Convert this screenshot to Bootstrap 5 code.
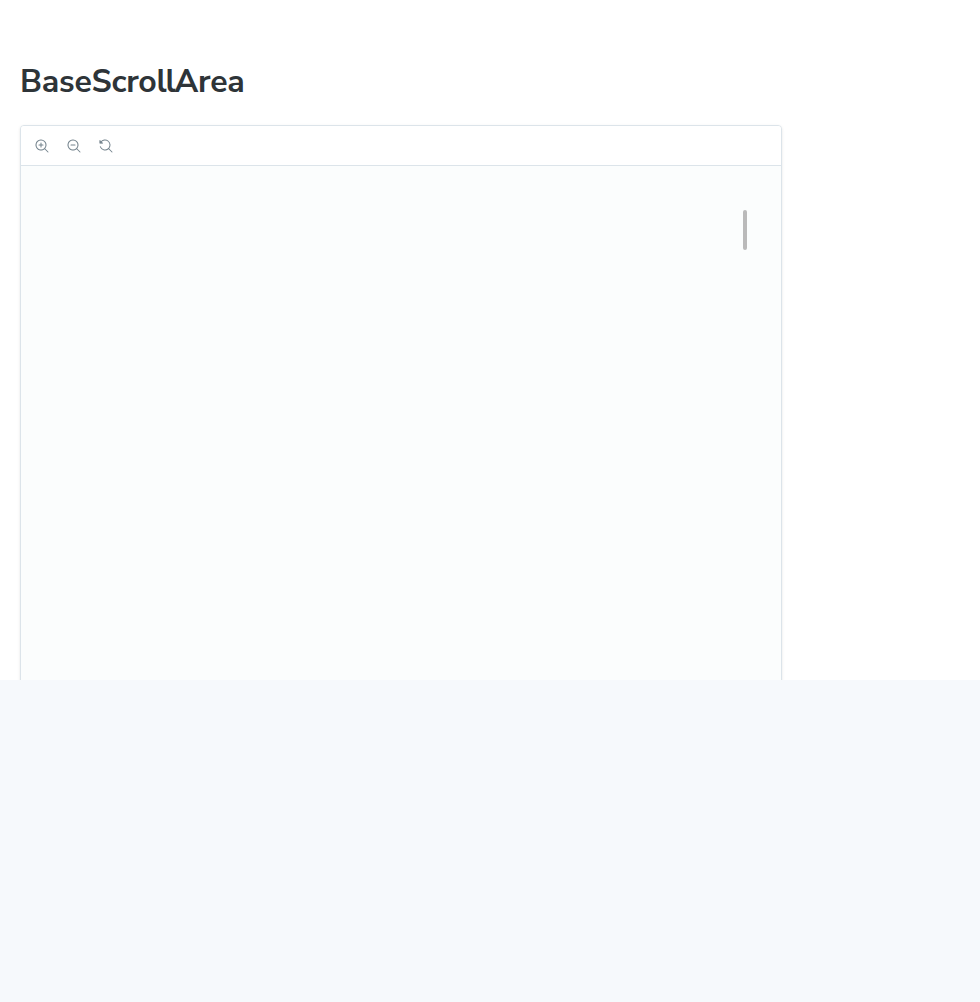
<!DOCTYPE html>
<html lang="en">
<head>
<meta charset="utf-8">
<meta name="viewport" content="width=device-width, initial-scale=1">
<title>BaseScrollArea</title>
<link rel="stylesheet" href="https://cdn.jsdelivr.net/npm/bootstrap@5.3.0/dist/css/bootstrap.min.css">
<style>
body { background: #f6f9fc; font-family: "Nunito Sans", Lato, "Open Sans", sans-serif; min-height: 100vh; }
.docs-page { height: 680px; padding: 64px 20px 0; }
.docs-title { color: #2e3438; font-size: 32px; line-height: 36px; font-weight: 700; letter-spacing: -0.25px; margin-bottom: 25px; }
.tight-pair { letter-spacing: -1.2px; }
.preview { width: 762px; height: 700px; border: 1px solid #dce4ea; border-radius: 4px; background: #fbfdfd; box-shadow: 0 1px 3px rgba(0,0,0,.1); }
.preview-bar { height: 40px; border-bottom: 1px solid #dce4ea; border-radius: 3px 3px 0 0; padding-left: 7px; gap: 4px; }
.tool { width: 28px; height: 28px; color: #73828c; }
.tool svg { width: 14px; height: 14px; }
.scroll-region { padding: 44px 34px 0 0; }
.scroll-thumb { width: 4px; height: 40px; border-radius: 2px; background: #bababa; }
</style>
</head>
<body>
<main class="docs-page bg-white overflow-hidden">
  <h1 class="docs-title">BaseScro<span class="tight-pair">ll</span>Area</h1>
  <section class="preview">
    <div class="preview-bar d-flex align-items-center bg-white">
      <button class="tool btn border-0 p-0 d-flex align-items-center justify-content-center" type="button" aria-label="Zoom in">
        <svg viewBox="0 0 14 14" fill="currentColor"><path d="M6 3.5a.5.5 0 01.5.5v1.5H8a.5.5 0 010 1H6.5V8a.5.5 0 01-1 0V6.5H4a.5.5 0 010-1h1.5V4a.5.5 0 01.5-.5z"/><path fill-rule="evenodd" d="M9.544 10.206a5.5 5.5 0 11.662-.662.5.5 0 01.148.102l3 3a.5.5 0 01-.708.708l-3-3a.5.5 0 01-.102-.148zM10.5 6a4.5 4.5 0 11-9 0 4.5 4.5 0 019 0z"/></svg>
      </button>
      <button class="tool btn border-0 p-0 d-flex align-items-center justify-content-center" type="button" aria-label="Zoom out">
        <svg viewBox="0 0 14 14" fill="currentColor"><path d="M4 5.5a.5.5 0 000 1h4a.5.5 0 000-1H4z"/><path fill-rule="evenodd" d="M9.544 10.206a5.5 5.5 0 11.662-.662.5.5 0 01.148.102l3 3a.5.5 0 01-.708.708l-3-3a.5.5 0 01-.102-.148zM10.5 6a4.5 4.5 0 11-9 0 4.5 4.5 0 019 0z"/></svg>
      </button>
      <button class="tool btn border-0 p-0 d-flex align-items-center justify-content-center" type="button" aria-label="Reset zoom">
        <svg viewBox="0 0 14 14" fill="currentColor"><path d="M1.5 2.837V1.5a.5.5 0 00-1 0V4a.5.5 0 00.5.5h2.5a.5.5 0 000-1H2.258a4.5 4.5 0 11-.496 4.016.5.5 0 10-.942.337 5.502 5.502 0 008.724 2.353.5.5 0 00.102.148l3 3a.5.5 0 00.708-.708l-3-3a.5.5 0 00-.148-.102A5.5 5.5 0 101.5 2.837z"/><path d="M.8 1.4v2.8h2.9z"/></svg>
      </button>
    </div>
    <div class="scroll-region d-flex justify-content-end">
      <div class="scroll-thumb"></div>
    </div>
  </section>
</main>
<script src="https://cdn.jsdelivr.net/npm/bootstrap@5.3.0/dist/js/bootstrap.bundle.min.js"></script>
</body>
</html>
